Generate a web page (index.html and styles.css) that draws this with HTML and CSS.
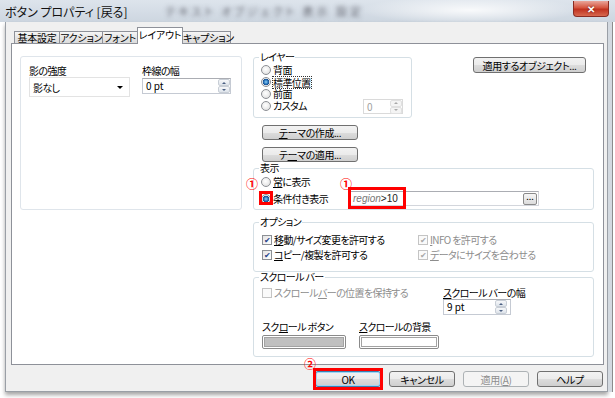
FILE: index.html
```html
<!DOCTYPE html>
<html lang="ja">
<head>
    <meta charset="UTF-8">
    <title>ボタン プロパティ [戻る]</title>
    <link rel="stylesheet" href="styles.css">
</head>
<body>
<div class="window">
    <div class="titlebar">
        <span class="title">ボタン プロパティ [戻る]</span>
        <span class="ghost">テキスト オブジェクト 表示 設定</span>
        <span class="close-btn">&#x2715;</span>
    </div>

    <div class="dialog">
        <div class="tabs">
            <span class="tab t1">基本設定</span>
            <span class="tab t2">アクション</span>
            <span class="tab t3">フォント</span>
            <span class="tab t4 active">レイアウト</span>
            <span class="tab t5">キャプション</span>
        </div>

        <div class="panel">
            <!-- left: shadow / border -->
            <div class="left-col">
                <div class="box">
                    <div class="field shadow-field">
                        <span class="lbl">影の強度</span>
                        <div class="select"><span>影なし</span><span class="caret"></span></div>
                    </div>
                    <div class="field border-field">
                        <span class="lbl">枠線の幅</span>
                        <div class="spin wide"><span class="val">0 pt</span><span class="spinner"><i class="up"></i><i class="down"></i></span></div>
                    </div>
                </div>
            </div>

            <!-- right: layer, theme, show, options, scrollbar -->
            <div class="right-col">
                <div class="top-row">
                    <fieldset class="group layer">
                        <legend>レイヤー</legend>
                        <div class="opt"><span class="radio"></span>背面</div>
                        <div class="opt"><span class="radio on"></span><span class="focus">標準位置</span></div>
                        <div class="opt"><span class="radio"></span>前面</div>
                        <div class="opt"><span class="radio"></span>カスタム
                            <div class="spin custom off"><span class="val">0</span><span class="spinner"><i class="up"></i><i class="down"></i></span></div>
                        </div>
                    </fieldset>
                    <button class="btn objects">適用するオブジェクト...</button>
                </div>

                <button class="btn theme"><u>テ</u>ーマの作成...</button>
                <button class="btn theme second">テ<u>ー</u>マの適用...</button>

                <fieldset class="group show">
                    <legend>表示</legend>
                    <div class="opt row1"><span class="radio"></span><u>常</u>に表示</div>
                    <div class="opt row2">
                        <span class="radio on"></span><span class="cond-label">条件付き表示</span>
                        <div class="cond"><span class="cond-text"><em>region</em>&gt;10</span><span class="dots">...</span></div>
                    </div>
                </fieldset>

                <fieldset class="group options">
                    <legend>オプション</legend>
                    <div class="opt-grid">
                        <div class="opt chk"><span class="check">&#x2714;</span><u>移</u>動/サイズ変更を許可する</div>
                        <div class="opt chk off"><span class="check">&#x2714;</span><u>I</u>NFO を許可する</div>
                        <div class="opt chk"><span class="check">&#x2714;</span><u>コ</u>ピー/複製を許可する</div>
                        <div class="opt chk off"><span class="check">&#x2714;</span><u>デ</u>ータにサイズを合わせる</div>
                    </div>
                </fieldset>

                <fieldset class="group scroll">
                    <legend>スクロール バー</legend>
                    <div class="scroll-top">
                        <div class="opt chk off"><span class="check empty"></span>スクロール <u>バ</u>ーの位置を保持する</div>
                        <div class="field scroll-width">
                            <span class="lbl"><u>ス</u>クロール バーの幅</span>
                            <div class="spin narrow"><span class="val">9 pt</span><span class="spinner"><i class="up"></i><i class="down"></i></span></div>
                        </div>
                    </div>
                    <div class="swatches">
                        <div class="field">
                            <span class="lbl">スク<u>ロ</u>ール ボタン</span>
                            <span class="swatch"><span class="fill gray"></span></span>
                        </div>
                        <div class="field">
                            <span class="lbl"><u>ス</u>クロールの背景</span>
                            <span class="swatch bg"><span class="fill"></span></span>
                        </div>
                    </div>
                </fieldset>
            </div>
        </div>

        <div class="footer">
            <button class="btn foot default">OK</button>
            <button class="btn foot">キャンセル</button>
            <button class="btn foot" disabled>適用(<u>A</u>)</button>
            <button class="btn foot">ヘルプ</button>
        </div>
    </div>

    <!-- red annotations on top of the screenshot -->
    <span class="num n1">&#x2460;</span>
    <span class="num n2">&#x2460;</span>
    <span class="num n3">&#x2461;</span>
    <span class="mark m-radio"></span>
    <span class="mark m-text"></span>
    <span class="mark m-ok"></span>
</div>
</body>
</html>
```

FILE: styles.css
```css
* {
    box-sizing: border-box;
}

body {
    margin: 0;
    width: 615px;
    height: 398px;
    overflow: hidden;
    background-color: #fff;
    font-family: "Noto Sans CJK JP", "Noto Sans", sans-serif;
    font-size: 10px;
    font-feature-settings: "palt" 1;
    letter-spacing: -0.6px;
    color: #000;
}

u {
    text-decoration: underline;
    text-underline-offset: 1px;
}

.window {
    position: relative;
    width: 615px;
    height: 398px;
}

/* title bar */
.titlebar {
    height: 22px;
    display: flex;
    align-items: center;
    padding-left: 5px;
    letter-spacing: 0;
    background:
        radial-gradient(ellipse 110px 14px at 470px 10px, rgba(255, 255, 255, 0.85), rgba(255, 255, 255, 0)),
        linear-gradient(#dde4ec, #cdd6e0);
}

.title {
    font-size: 12px;
    color: #111;
}

.ghost {
    margin-left: 38px;
    font-size: 11px;
    letter-spacing: 3px;
    color: transparent;
    text-shadow: 0 0 4px rgba(60, 60, 70, 0.7);
}

.close-btn {
    align-self: flex-start;
    margin: 1px 6px 0 auto;
    width: 36px;
    height: 16px;
    display: flex;
    align-items: center;
    justify-content: center;
    border: 1px solid #8a2c22;
    border-top: none;
    border-radius: 0 0 4px 4px;
    background: linear-gradient(#e9a59a, #d5553f 45%, #c0321f 55%, #d8694f);
    color: #fff;
    font-size: 10px;
    font-weight: bold;
    text-shadow: 0 0 2px #5a1208;
}

/* dialog body */
.dialog {
    margin-left: 5px;
    width: 603px;
    height: 370px;
    background-color: #f0f0f0;
    border: 1px solid #9a9fa6;
    border-top: none;
    box-shadow: 4px 0 0 #d3d9e0, 5px 0 0 #8c8c8c, 0 3px 4px rgba(0, 0, 0, 0.35);
}

.tabs {
    display: flex;
    align-items: flex-end;
    height: 21px;
    padding-left: 8px;
}

.tab {
    position: relative;
    height: 12px;
    line-height: 11px;
    margin-left: -1px;
    text-align: center;
    white-space: nowrap;
    border: 1px solid #8e9199;
    border-bottom: none;
    background: linear-gradient(#f6f6f6, #e6e6e6 50%, #dcdcdc);
    font-size: 10px;
    letter-spacing: -0.2px;
}

.t1 { width: 46px; margin-left: 0; }
.t2 { width: 44px; }
.t3 { width: 36px; }
.t4 { width: 46px; }
.t5 { width: 49px; }

.tab.active {
    z-index: 1;
    height: 17px;
    line-height: 14px;
    margin-bottom: -1px;
    background: #fff;
}

.panel {
    display: flex;
    gap: 11px;
    width: 593px;
    height: 322px;
    margin-left: 5px;
    padding: 6px 0 0 8px;
    background-color: #fff;
    border: 1px solid #8e9199;
}

/* left box */
.left-col {
    width: 222px;
    margin-top: 6px;
}

.box {
    display: flex;
    gap: 12px;
    height: 154px;
    padding: 7px 0 0 8px;
    border: 1px solid #dfe5eb;
    border-radius: 3px;
}

.field {
    display: flex;
    flex-direction: column;
}

.lbl {
    line-height: 14px;
    white-space: nowrap;
}

.select {
    display: flex;
    align-items: center;
    width: 101px;
    height: 20px;
    margin-top: -1px;
    padding: 0 4px 0 3px;
    border: 1px solid #e3e3e3;
}

.caret {
    margin-left: auto;
    margin-right: 2px;
    border-left: 3px solid transparent;
    border-right: 3px solid transparent;
    border-top: 3px solid #000;
}

.spin {
    display: flex;
    align-items: flex-start;
    background-color: #fff;
    border: 1px solid #c5cad3;
    border-top-color: #abadb3;
}

.spin .val {
    padding: 1px 0 0 3px;
    line-height: 11px;
    letter-spacing: 0;
}

.spin.wide {
    width: 89px;
    height: 16px;
}

.spin.narrow {
    width: 68px;
    height: 16px;
    margin-top: -1px;
}

.spinner {
    display: flex;
    flex-direction: column;
    width: 12px;
    height: 14px;
    margin-left: auto;
}

.spinner i {
    flex: 1;
    display: flex;
    align-items: center;
    justify-content: center;
    border: 1px solid #c8ced6;
    border-radius: 2px;
    background: linear-gradient(#f7f8fa, #dde3ea);
}

.spinner i::after {
    content: "";
    border-left: 2px solid transparent;
    border-right: 2px solid transparent;
}

.spinner .up::after {
    border-bottom: 2px solid #4a5f82;
}

.spinner .down::after {
    border-top: 2px solid #4a5f82;
}

.spin.narrow .spinner {
    margin-right: 3px;
}

/* right column */
.right-col {
    width: 342px;
    display: flex;
    flex-direction: column;
    align-items: flex-start;
}

.top-row {
    display: flex;
    align-items: flex-start;
}

.group {
    margin: 0;
    min-width: 0;
    padding: 0 8px 0 7px;
    border: 1px solid #d5dfe5;
    border-radius: 3px;
}

.group legend {
    padding: 0 1px;
    margin-left: -2px;
    line-height: 14px;
}

.layer {
    width: 159px;
    padding-bottom: 5px;
}

.opt {
    display: flex;
    align-items: center;
    height: 12px;
    line-height: 12px;
    white-space: nowrap;
}

.radio {
    flex: none;
    width: 10px;
    height: 10px;
    margin-right: 2px;
    border-radius: 50%;
    border: 1px solid #8c8f94;
    background: radial-gradient(circle at 45% 40%, #fff, #e9e9e9 60%, #d2d2d2);
}

.radio.on {
    background: radial-gradient(circle at 50% 50%, #8fd0f5 0, #2a78c0 2px, #1a4f8f 3px, #f4f4f4 3.6px, #d7d7d7 5px);
}

.focus {
    outline: 1px dotted #333;
    line-height: 11px;
}

.custom {
    width: 40px;
    height: 15px;
    margin-left: auto;
    border-color: #dadada;
}

.custom .val {
    color: #a0a0a0;
}

.custom .spinner i {
    border-color: #e0e0e0;
    background: #f4f4f4;
}

.custom .spinner .up::after {
    border-bottom-color: #a8a8a8;
}

.custom .spinner .down::after {
    border-top-color: #a8a8a8;
}

.btn {
    height: 16px;
    padding: 0;
    border: 1px solid #707070;
    border-radius: 3px;
    background: linear-gradient(#f2f2f2, #ebebeb 50%, #dddddd 50%, #cfcfcf);
    font-family: inherit;
    font-size: 10px;
    font-feature-settings: "palt" 1;
    letter-spacing: -0.4px;
    line-height: 13px;
    color: #000;
    white-space: nowrap;
}

.objects {
    width: 113px;
    margin: 7px 0 0 61px;
}

.theme {
    width: 96px;
    height: 15px;
    margin: 7px 0 0 9px;
}

/* show */
.show {
    width: 341px;
    margin-top: -1px;
    padding-bottom: 1px;
}

.show .row1 {
    height: 14px;
}

.show .row2 {
    height: 19px;
}

.cond-label {
    width: 76px;
}

.cond {
    display: flex;
    align-items: center;
    width: 190px;
    height: 15px;
    padding-left: 3px;
    border: 1px solid #d3d6dc;
    border-top-color: #abadb3;
}

.cond-text {
    font-family: "Liberation Sans", Arial, sans-serif;
    font-size: 10px;
    letter-spacing: 0;
    color: #222;
}

.cond-text em {
    color: #777;
}

.dots {
    margin-left: auto;
    margin-right: 1px;
    width: 14px;
    height: 12px;
    line-height: 6px;
    text-align: center;
    font-size: 9px;
    letter-spacing: 0;
    border: 1px solid #8a8a8a;
    border-radius: 2px;
    background: linear-gradient(#f6f6f6, #dcdcdc);
}

/* options */
.options {
    width: 341px;
    margin-top: 5px;
    padding-top: 3px;
    padding-bottom: 9px;
}

.opt-grid {
    display: grid;
    grid-template-columns: 156px auto;
}

.opt.chk {
    height: 15px;
}

.check {
    flex: none;
    width: 10px;
    height: 10px;
    margin: 0 2px 0 1px;
    display: flex;
    align-items: center;
    justify-content: center;
    border: 1px solid #8c8f94;
    background: linear-gradient(135deg, #e3e3e3, #fff);
    font-size: 8px;
    line-height: 8px;
    letter-spacing: 0;
    color: #24418a;
}

.off {
    color: #8d8d8d;
}

.off .check {
    border-color: #c4c4c4;
    color: #a9a9a9;
    background: #fafafa;
}

/* scroll bar */
.scroll {
    width: 341px;
    margin-top: -2px;
    padding-top: 2px;
    padding-bottom: 7px;
}

.scroll-top {
    display: flex;
    align-items: flex-start;
}

.scroll-top .chk {
    width: 159px;
    height: 14px;
}

.scroll-width {
    margin-left: 23px;
}

.swatches {
    display: flex;
    gap: 13px;
    margin-top: 5px;
}

.swatches .field:first-child {
    margin-left: 1px;
}

.swatch {
    display: flex;
    height: 14px;
    margin-top: 1px;
    padding: 1px;
    border: 1px solid #8a8a8a;
    border-radius: 2px;
    background-color: #fff;
    width: 84px;
}

.swatch.bg {
    width: 80px;
}

.fill {
    flex: 1;
    border: 1px solid #a3a3a3;
    background-color: #fff;
}

.fill.gray {
    background-color: #c0c0c0;
}

/* footer */
.footer {
    display: flex;
    justify-content: flex-end;
    gap: 8px;
    padding: 6px 4px 0 0;
}

.foot {
    width: 66px;
}

.foot.default {
    border-color: #3c7fb1;
    box-shadow: inset 0 0 0 1px #9fd6f5;
}

.btn:disabled {
    border-color: #adb2b5;
    background: #f4f4f4;
    color: #8d8d8d;
}

/* red annotations */
.num {
    position: absolute;
    font-size: 12px;
    line-height: 12px;
    font-weight: bold;
    letter-spacing: 0;
    color: #ff0000;
}

.n1 { left: 246px; top: 178px; }
.n2 { left: 340px; top: 178px; }
.n3 { left: 304px; top: 358px; }

.mark {
    position: absolute;
    border: 3px solid #ff0000;
}

.m-radio { left: 259px; top: 191px; width: 14px; height: 14px; }
.m-text { left: 348px; top: 187px; width: 58px; height: 22px; }
.m-ok { left: 313px; top: 368px; width: 70px; height: 22px; }
```
